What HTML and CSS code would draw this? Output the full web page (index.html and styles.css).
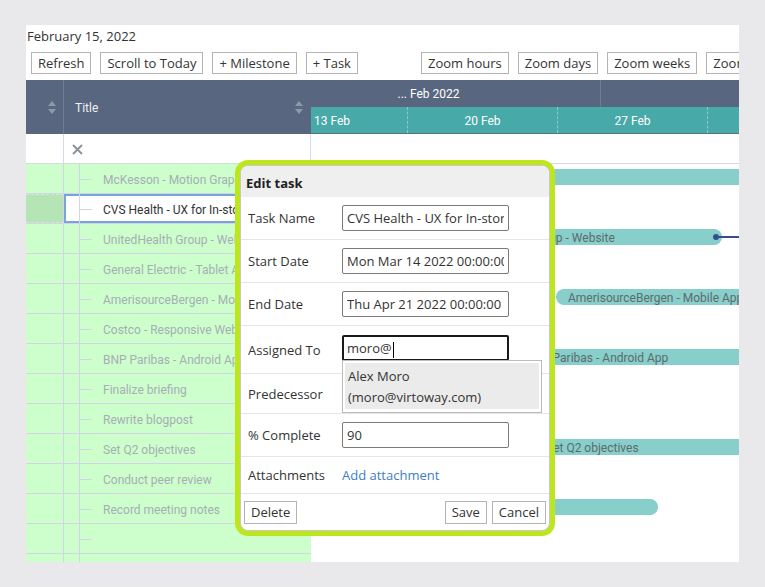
FILE: index.html
```html
<!DOCTYPE html>
<html lang="en">
<head>
  <meta charset="UTF-8" />
  <meta name="viewport" content="width=device-width, initial-scale=1.0"/>
  <title>Gantt – Edit task</title>
  <link rel="stylesheet" href="styles.css">
</head>
<body>
  <div class="page">
    <div class="date">February 15, 2022</div>

    <div class="toolbar">
      <div class="group">
        <button class="btn">Refresh</button>
        <button class="btn">Scroll to Today</button>
        <button class="btn">+ Milestone</button>
        <button class="btn">+ Task</button>
      </div>
      <div class="group">
        <button class="btn">Zoom hours</button>
        <button class="btn">Zoom days</button>
        <button class="btn">Zoom weeks</button>
        <button class="btn">Zoom months</button>
      </div>
    </div>

    <div class="gantt">
      <!-- left grid -->
      <div class="grid">
        <div class="grid-head">
          <div class="head-num">
            <svg class="sort" width="8" height="13" viewBox="0 0 8 13"><path d="M4 0 L8 5 L0 5 Z M0 8 L8 8 L4 13 Z" fill="#8e99aa"/></svg>
          </div>
          <div class="head-title">
            <span class="head-text">Title</span>
            <svg class="sort" width="8" height="13" viewBox="0 0 8 13"><path d="M4 0 L8 5 L0 5 Z M0 8 L8 8 L4 13 Z" fill="#8e99aa"/></svg>
          </div>
        </div>
        <div class="grid-row filter">
          <div class="col-num"></div>
          <div class="col-clear">
            <svg width="11" height="11" viewBox="0 0 11 11"><path d="M1 1 L10 10 M10 1 L1 10" stroke="#8a9099" stroke-width="1.8"/></svg>
          </div>
        </div>
        <div class="grid-row"><div class="col-num"></div><div class="col-title">McKesson - Motion Graphics</div></div>
        <div class="grid-row selected"><div class="col-num"></div><div class="col-title">CVS Health - UX for In-store Kiosk</div></div>
        <div class="grid-row"><div class="col-num"></div><div class="col-title">UnitedHealth Group - Website</div></div>
        <div class="grid-row"><div class="col-num"></div><div class="col-title">General Electric - Tablet App</div></div>
        <div class="grid-row"><div class="col-num"></div><div class="col-title">AmerisourceBergen - Mobile App</div></div>
        <div class="grid-row"><div class="col-num"></div><div class="col-title">Costco - Responsive Website</div></div>
        <div class="grid-row"><div class="col-num"></div><div class="col-title">BNP Paribas - Android App</div></div>
        <div class="grid-row"><div class="col-num"></div><div class="col-title">Finalize briefing</div></div>
        <div class="grid-row"><div class="col-num"></div><div class="col-title">Rewrite blogpost</div></div>
        <div class="grid-row"><div class="col-num"></div><div class="col-title">Set Q2 objectives</div></div>
        <div class="grid-row"><div class="col-num"></div><div class="col-title">Conduct peer review</div></div>
        <div class="grid-row"><div class="col-num"></div><div class="col-title">Record meeting notes</div></div>
        <div class="grid-row"><div class="col-num"></div><div class="col-title"></div></div>
        <div class="grid-row"><div class="col-num"></div><div class="col-title"></div></div>
      </div>

      <!-- timeline -->
      <div class="timeline">
        <div class="timeline-inner">
          <div class="scale-top">
            <div class="month">... Feb 2022</div>
            <div class="month next"></div>
          </div>
          <div class="scale-bottom">
            <div class="week">13 Feb</div>
            <div class="week">20 Feb</div>
            <div class="week">27 Feb</div>
            <div class="week"></div>
          </div>
          <div class="t-row filter"></div>
          <div class="t-row"><div class="bar" style="left: 100px; width: 700px;">McKesson - Motion Graphics</div></div>
          <div class="t-row"></div>
          <div class="t-row">
            <div class="bar" style="left: 189px; width: 276px;">UnitedHealth Group - Website</div>
            <div class="link" style="left: 459px; width: 300px;"></div>
          </div>
          <div class="t-row"></div>
          <div class="t-row"><div class="bar" style="left: 299px; width: 600px;">AmerisourceBergen - Mobile App</div></div>
          <div class="t-row"></div>
          <div class="t-row"><div class="bar" style="left: 257px; width: 600px;">BNP Paribas - Android App</div></div>
          <div class="t-row"></div>
          <div class="t-row"></div>
          <div class="t-row"><div class="bar" style="left: 277px; width: 600px;">Set Q2 objectives</div></div>
          <div class="t-row"></div>
          <div class="t-row"><div class="bar" style="left: 150px; width: 251px;">Record meeting notes</div></div>
        </div>
      </div>
    </div>

    <!-- edit dialog -->
    <div class="dialog">
      <div class="dialog-head">Edit task</div>
      <div class="field">
        <span class="label">Task Name</span>
        <input class="input" value="CVS Health - UX for In-store Kiosk">
      </div>
      <div class="field">
        <span class="label">Start Date</span>
        <input class="input" value="Mon Mar 14 2022 00:00:00 GMT+0000">
      </div>
      <div class="field">
        <span class="label">End Date</span>
        <input class="input" value="Thu Apr 21 2022 00:00:00 GMT+0000">
      </div>
      <div class="field field-assign">
        <span class="label">Assigned To</span>
        <div class="combo">
          <div class="input active">moro@<span class="caret"></span></div>
          <div class="suggest">
            <div class="suggest-item">Alex Moro<br>(moro@virtoway.com)</div>
          </div>
        </div>
      </div>
      <div class="field field-pred">
        <span class="label">Predecessor</span>
      </div>
      <div class="field">
        <span class="label">% Complete</span>
        <input class="input" value="90">
      </div>
      <div class="field field-attach">
        <span class="label">Attachments</span>
        <a class="attach" href="#">Add attachment</a>
      </div>
      <div class="dialog-foot">
        <button class="btn">Delete</button>
        <div class="group">
          <button class="btn">Save</button>
          <button class="btn">Cancel</button>
        </div>
      </div>
    </div>
  </div>
</body>
</html>
```

FILE: styles.css
```css
body {
  margin: 0;
  background-color: #e9e9eb;
  font-family: "Open Sans", sans-serif;
  font-size: 13px;
  color: #333;
}
.page {
  position: relative;
  margin: 25px 0 0 26px;
  width: 713px;
  height: 537px;
  background-color: #fff;
  overflow: hidden;
}
.date {
  height: 22px;
  line-height: 22px;
  padding-left: 1px;
}
.toolbar {
  display: flex;
  gap: 63px;
  margin-top: 5px;
  padding-left: 5px;
  white-space: nowrap;
}
.group {
  display: flex;
  gap: 9px;
  flex-shrink: 0;
}
.btn {
  height: 22px;
  padding: 0 6px;
  border: 1px solid #b4b4b4;
  background-color: #fff;
  font-family: "Open Sans", sans-serif;
  font-size: 13px;
  color: #333;
  line-height: 20px;
  flex-shrink: 0;
}

/* gantt */
.gantt {
  display: flex;
  margin-top: 6px;
  height: 482px;
}
.grid {
  width: 285px;
  flex-shrink: 0;
  background-color: #ccffcc;
  font-family: Roboto, sans-serif;
  font-size: 12px;
}
.grid-head {
  display: flex;
  height: 54px;
  background-color: #58667f;
  color: #eef1f5;
}
.head-num {
  width: 38px;
  box-sizing: border-box;
  border-right: 1px solid #6e7b91;
  display: flex;
  align-items: center;
  justify-content: flex-end;
  padding-right: 7px;
}
.head-title {
  flex: 1;
  display: flex;
  align-items: center;
  justify-content: space-between;
  padding: 0 8px 0 11px;
}
.head-text {
  padding-top: 2px;
}
.grid-row {
  display: flex;
  height: 30px;
  box-sizing: border-box;
  border-bottom: 1px solid #d6d3e8;
}
.grid-row.filter {
  background-color: #fff;
  border-bottom-color: #d3dbe6;
}
.col-num {
  width: 38px;
  flex-shrink: 0;
  box-sizing: border-box;
  border-right: 1px solid #d6d3e8;
}
.filter .col-num {
  border-right-color: #d3dbe6;
}
.col-clear {
  flex: 1;
  display: flex;
  align-items: center;
  padding: 2px 0 0 8px;
  border-right: 1px solid #d3dbe6;
}
.col-title {
  position: relative;
  flex: 1;
  padding: 2px 0 0 39px;
  line-height: 29px;
  color: #a8adb5;
  white-space: nowrap;
  overflow: hidden;
}
.col-title::before {
  content: "";
  position: absolute;
  left: 15px;
  top: 0;
  bottom: -1px;
  border-left: 1px solid #d6d3e8;
}
.col-title::after {
  content: "";
  position: absolute;
  left: 16px;
  top: 15px;
  width: 12px;
  border-top: 1px solid #d6d3e8;
}
.selected .col-num {
  background-color: #b5e5b5;
  border-top: 1px dashed #d6e8d6;
  border-bottom: 1px dashed #d6e8d6;
}
.selected .col-title {
  background-color: #fff;
  color: #333;
  box-shadow: inset 0 0 0 2px #74a6dc;
}

/* timeline */
.timeline {
  flex: 1;
  overflow: hidden;
  font-family: Roboto, sans-serif;
  font-size: 12px;
}
.timeline-inner {
  margin-left: -54px;
  width: 1100px;
}
.scale-top {
  display: flex;
  height: 27px;
  background-color: #58667f;
  color: #fff;
}
.month {
  width: 343px;
  text-align: center;
  line-height: 29px;
}
.month.next {
  width: 400px;
  border-left: 1px solid #6e7b91;
}
.scale-bottom {
  display: flex;
  height: 27px;
  box-sizing: border-box;
  background-color: #47a9a8;
  border-bottom: 1px solid #5b7083;
  color: #fff;
}
.week {
  width: 150px;
  box-sizing: border-box;
  text-align: center;
  line-height: 28px;
  border-left: 1px dashed #86cbc9;
}
.week:first-child {
  border-left: none;
}
.t-row {
  position: relative;
  height: 30px;
}
.t-row.filter {
  box-sizing: border-box;
  border-bottom: 1px solid #d3dbe6;
}
.bar {
  position: absolute;
  top: 5px;
  height: 16px;
  box-sizing: border-box;
  border-radius: 8px;
  background-color: #88ceca;
  color: #5d6b6d;
  line-height: 18px;
  padding-left: 12px;
  white-space: nowrap;
  overflow: hidden;
}
.link {
  position: absolute;
  top: 12px;
  height: 2px;
  background-color: #34508a;
}
.link::before {
  content: "";
  position: absolute;
  left: -3px;
  top: -2px;
  width: 6px;
  height: 6px;
  border-radius: 50%;
  background-color: #34508a;
}

/* dialog */
.dialog {
  position: absolute;
  left: 214px;
  top: 140px;
  width: 310px;
  height: 366px;
  box-sizing: border-box;
  border: 1px solid #c8c8c8;
  border-radius: 8px;
  box-shadow: 0 0 0 5px #bee61e;
  background-color: #fff;
}
.dialog-head {
  height: 31px;
  line-height: 34px;
  padding-left: 5px;
  background-color: #efefef;
  border-radius: 7px 7px 0 0;
  font-weight: bold;
  color: #222;
}
.field {
  display: flex;
  align-items: center;
  height: 43px;
  box-sizing: border-box;
  border-bottom: 1px solid #e5e5e5;
}
.field-assign {
  height: 48px;
  align-items: flex-start;
  padding-top: 9px;
}
.field-assign .label {
  line-height: 26px;
  padding-top: 2px;
}
.field-pred {
  height: 40px;
}
.field-attach {
  height: 37px;
}
.label {
  width: 101px;
  flex-shrink: 0;
  box-sizing: border-box;
  padding-left: 7px;
}
.input {
  width: 167px;
  height: 26px;
  box-sizing: border-box;
  border: 1px solid #7a7a7a;
  border-radius: 2px;
  padding: 0 4px;
  font-family: "Open Sans", sans-serif;
  font-size: 13px;
  color: #333;
}
.input.active {
  border: 2px solid #1a1a1a;
  padding: 0 3px;
  line-height: 22px;
}
.caret {
  display: inline-block;
  width: 1px;
  height: 16px;
  margin-left: 1px;
  background-color: #000;
  vertical-align: middle;
}
.combo {
  position: relative;
}
.suggest {
  position: absolute;
  top: 25px;
  left: 0;
  width: 200px;
  height: 53px;
  box-sizing: border-box;
  padding: 2px;
  border: 1px solid #bbb;
  background-color: #fff;
  z-index: 2;
}
.suggest-item {
  padding: 3px 3px 0;
  line-height: 21px;
  height: 46px;
  box-sizing: border-box;
  background-color: #ebebeb;
}
.attach {
  color: #3d7ebf;
  text-decoration: none;
}
.dialog-foot {
  display: flex;
  align-items: center;
  justify-content: space-between;
  height: 36px;
  padding: 0 3px 0 3px;
}
.dialog-foot .btn {
  height: 23px;
}
.dialog-foot .group {
  gap: 5px;
}
```
